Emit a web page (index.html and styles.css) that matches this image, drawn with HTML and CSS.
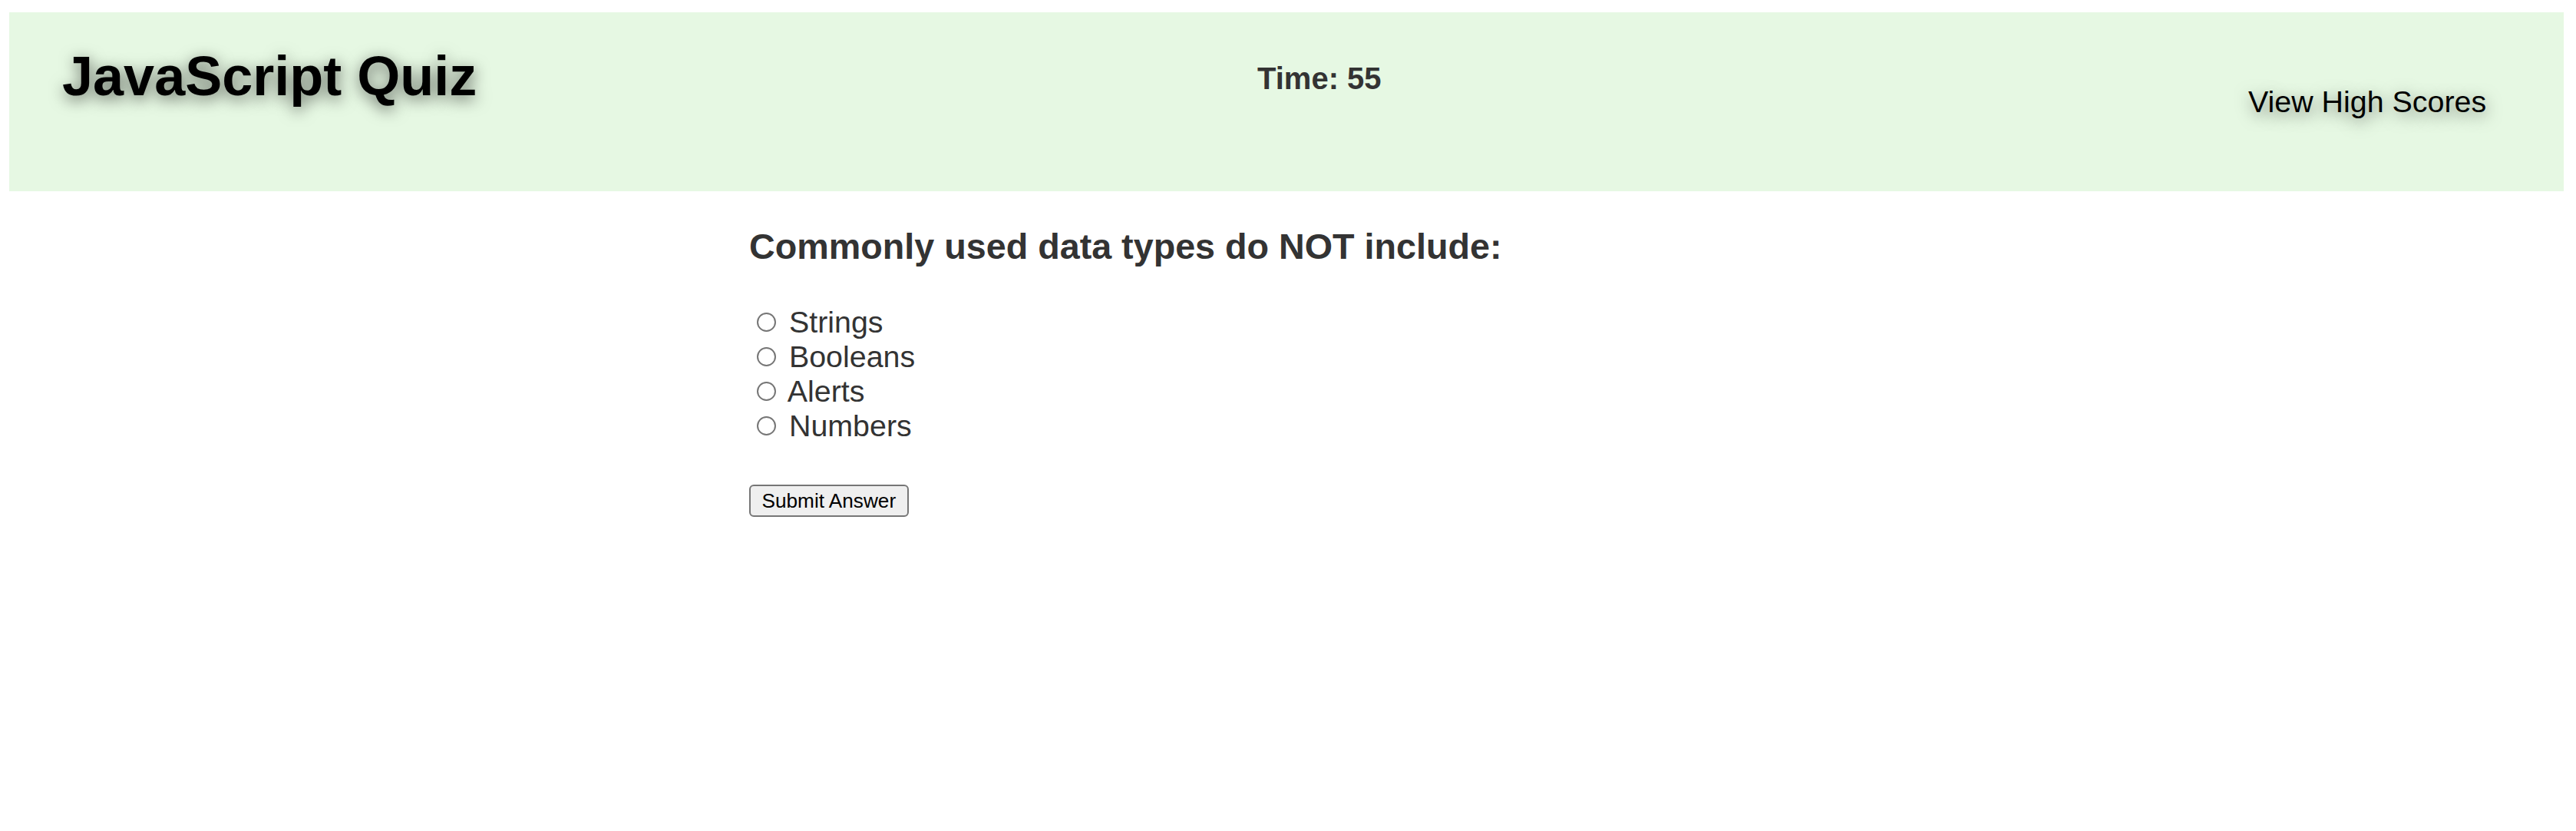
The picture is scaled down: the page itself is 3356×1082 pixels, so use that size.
FILE: index.html
```html
<!DOCTYPE html>
<html lang="en">
<head>
<meta charset="utf-8">
<title>JavaScript Quiz</title>
<link rel="stylesheet" href="styles.css">
</head>
<body>
  <header class="topbar">
    <h1 class="title">JavaScript Quiz</h1>
    <div class="timer">Time: 55</div>
    <a class="scores" href="#">View High Scores</a>
  </header>
  <main class="quiz">
    <h2 class="question">Commonly used data types do NOT include:</h2>
    <div class="options">
      <label class="option"><input type="radio" name="answer" class="radio"> Strings</label>
      <label class="option"><input type="radio" name="answer" class="radio"> Booleans</label>
      <label class="option"><input type="radio" name="answer" class="radio"> Alerts</label>
      <label class="option"><input type="radio" name="answer" class="radio"> Numbers</label>
    </div>
    <button class="submit" type="button">Submit Answer</button>
  </main>
</body>
</html>
```

FILE: styles.css
```css
html, body {
  margin: 0;
  padding: 0;
  background: #ffffff;
}

body {
  font-family: "Liberation Sans", Arial, Helvetica, sans-serif;
  color: #333333;
}

.topbar {
  margin: 16px 16px 0 12px;
  height: 233px;
  background: #e6f8e3;
  display: grid;
  grid-template-columns: 1557px 1291px auto;
  align-items: start;
  padding-left: 69px;
}

.title {
  margin: 42px 0 0 0;
  font-size: 72px;
  font-weight: bold;
  line-height: normal;
  color: #000000;
  text-shadow: 1px 5px 20px rgba(0, 0, 0, 0.6);
  white-space: nowrap;
}

.timer {
  margin-top: 64px;
  font-size: 40px;
  font-weight: bold;
  line-height: normal;
  color: #333333;
  white-space: nowrap;
}

.scores {
  margin-top: 94px;
  font-size: 39.4px;
  line-height: normal;
  color: #000000;
  text-decoration: none;
  text-shadow: 1px 5px 20px rgba(0, 0, 0, 0.5);
  white-space: nowrap;
}

.quiz {
  width: 1404px;
  margin: 0 auto;
}

.question {
  margin: 45px 0 48.6px 0;
  font-size: 46.7px;
  font-weight: bold;
  line-height: normal;
  color: #333333;
  white-space: nowrap;
}

.options {
  font-size: 39.4px;
  line-height: normal;
  color: #333333;
}

.option {
  display: block;
}

.radio {
  -webkit-appearance: none;
  appearance: none;
  box-sizing: border-box;
  width: 25px;
  height: 25px;
  margin: 6px 6px 0 10px;
  border: 2px solid #767676;
  border-radius: 50%;
  background: #ffffff;
  vertical-align: 1px;
}

.submit {
  margin-top: 54.5px;
  font-family: "Liberation Sans", Arial, Helvetica, sans-serif;
  font-size: 26.2px;
  line-height: normal;
  color: #000000;
  background: #efefef;
  border: 2px solid #767676;
  border-radius: 6px;
  padding: 3.5px 14.5px;
}
```
